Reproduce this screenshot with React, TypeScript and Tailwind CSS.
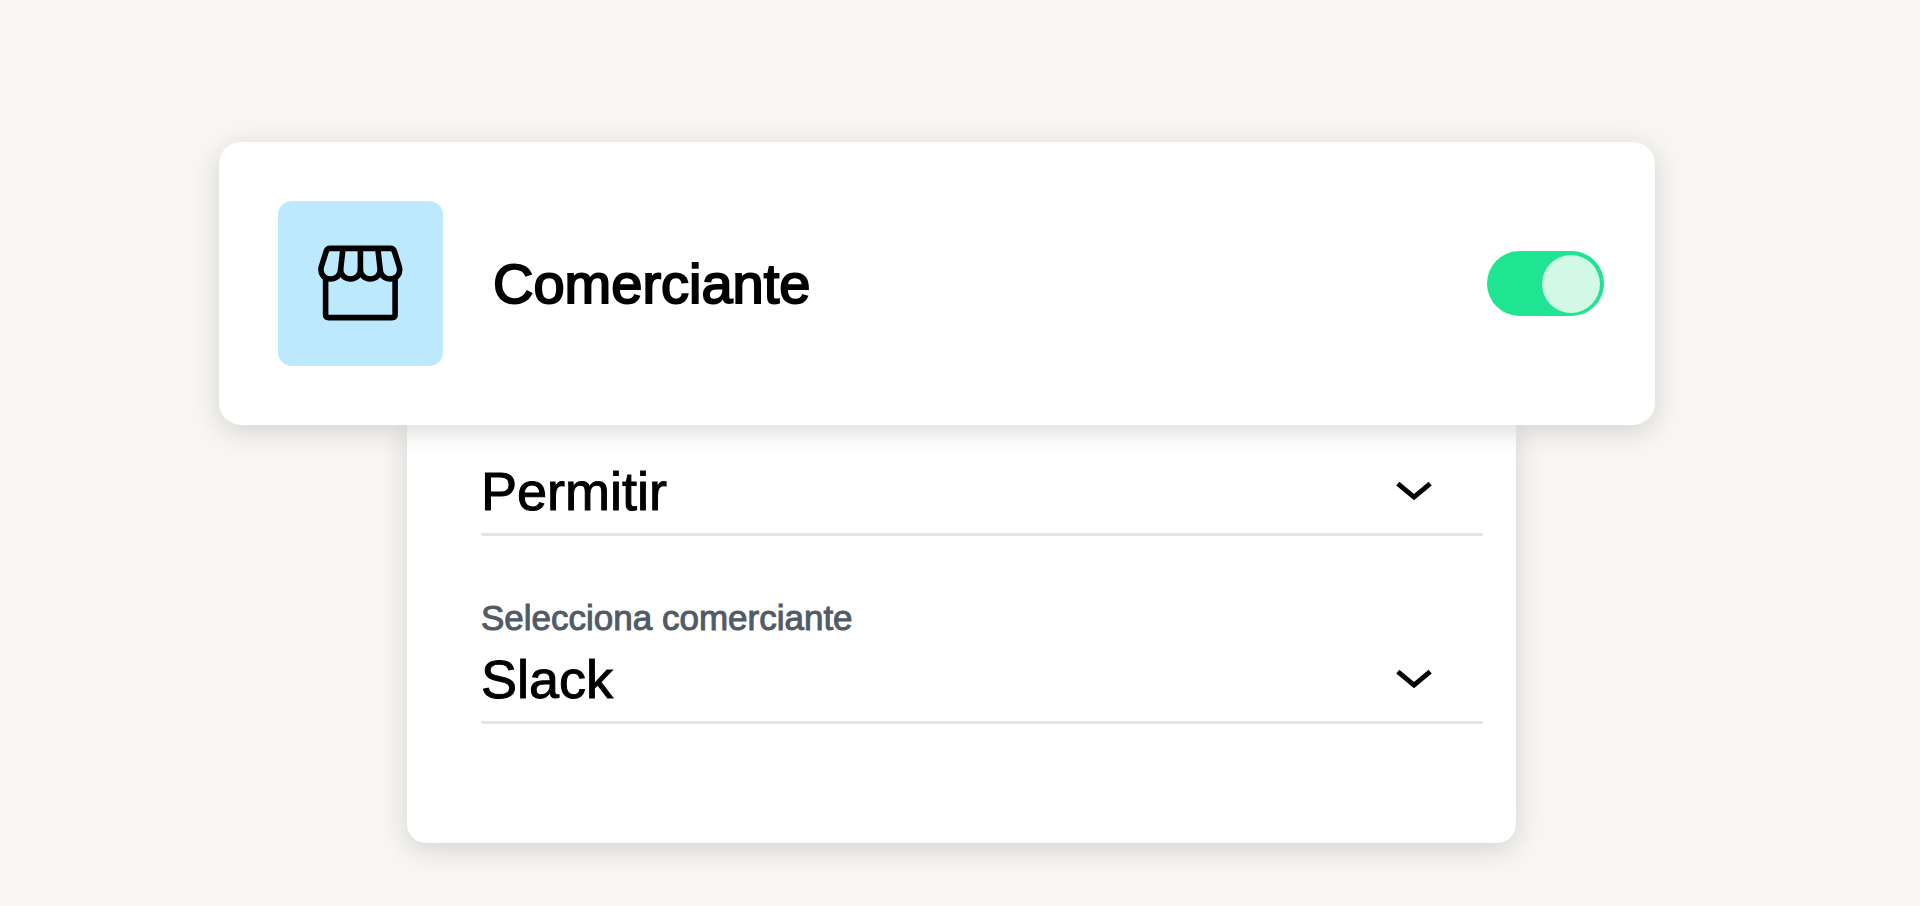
import { useState } from 'react';

interface SelectFieldProps {
    id: string;
    label: string;
    hideLabel?: boolean;
    options: string[];
    value: string;
    onChange: (value: string) => void;
}

function StoreIcon() {
    return (
        <svg
            viewBox="16 14 89 79"
            className="w-[89px] h-[79px]"
            fill="none"
            stroke="currentColor"
            strokeWidth="5.6"
            strokeLinejoin="round"
            aria-hidden="true"
        >
            {/* Walls */}
            <path d="M25.6 47V84.5Q25.6 87.6 28.7 87.6H92Q95.1 87.6 95.1 84.5V47" />
            {/* Awning */}
            <path d="M30.2 18.4H90.4Q93.4 18.4 94.4 21.4L99.2 36.5C101 43.5 97 49 90.2 49C84.5 49 80.2 45 80.2 39.5C80.2 45 76 49 70.3 49C64.6 49 60.4 45 60.4 39.5C60.4 45 56.2 49 50.5 49C44.8 49 40.6 45 40.6 39.5C40.6 45 36.3 49 30.6 49C23.8 49 19.6 43.5 21.4 36.5L26.2 21.4Q27.2 18.4 30.2 18.4Z" />
            <path d="M43 18.4L40.6 39.5M60.4 18.4V39.5M77.8 18.4L80.2 39.5" />
        </svg>
    );
}

function ChevronIcon() {
    return (
        <svg
            viewBox="0 0 36 20"
            className="pointer-events-none col-start-1 row-start-1 w-9 h-5 mr-[51px] mb-4 self-center justify-self-end"
            fill="none"
            stroke="currentColor"
            strokeWidth="4.8"
            aria-hidden="true"
        >
            <path d="M1.8 2.6L18 16.2L34.2 2.6" />
        </svg>
    );
}

function SelectField({
    id,
    label,
    hideLabel,
    options,
    value,
    onChange,
}: SelectFieldProps) {
    return (
        <div>
            {!hideLabel && (
                <label
                    htmlFor={id}
                    className="block mb-[11px] text-[35px] leading-10 text-[#515b66] [-webkit-text-stroke:1px_#515b66]"
                >
                    {label}
                </label>
            )}
            <div className="grid items-center">
                <select
                    id={id}
                    aria-label={hideLabel ? label : undefined}
                    value={value}
                    onChange={(e) => onChange(e.target.value)}
                    className="col-start-1 row-start-1 w-full h-[75px] appearance-none bg-transparent border-b-3 border-[#e8e5dd] pb-3 text-[54px] leading-[60px] text-black [-webkit-text-stroke:1px_black]"
                >
                    {options.map((option) => (
                        <option key={option} value={option}>
                            {option}
                        </option>
                    ))}
                </select>
                <ChevronIcon />
            </div>
        </div>
    );
}

export default function App() {
    const [enabled, setEnabled] = useState(true);
    const [action, setAction] = useState('Permitir');
    const [merchant, setMerchant] = useState('Slack');

    return (
        <main className="min-h-screen bg-[#f7f6f4] pt-[142px] pb-[63px] pl-[219px] pr-[265px] font-['Liberation_Sans',Arial,sans-serif] text-black">
            {/* Merchant toggle */}
            <section className="relative z-10 flex items-center rounded-[22px] bg-white p-[59px] pr-[51px] shadow-[0_6px_26px_rgba(40,30,20,0.16)]">
                <div className="flex size-[165px] shrink-0 items-center justify-center rounded-[14px] bg-[#bde9ff]">
                    <StoreIcon />
                </div>
                <label
                    htmlFor="merchant-enabled"
                    className="ml-[50px] flex-1 text-[56px] leading-[64px] [-webkit-text-stroke:2px_black]"
                >
                    Comerciante
                </label>
                <input
                    id="merchant-enabled"
                    type="checkbox"
                    role="switch"
                    checked={enabled}
                    onChange={(e) => setEnabled(e.target.checked)}
                    className="flex items-center h-[65px] w-[117px] shrink-0 appearance-none rounded-full bg-gray-300 px-1 checked:bg-[#1fe592] before:block before:size-[58px] before:rounded-full before:bg-[#d2f9e5] checked:before:ml-auto"
                />
            </section>

            {/* Rule settings */}
            <section className="ml-[188px] mr-[139px] flex flex-col gap-[62px] rounded-b-[19px] bg-white pt-9 pb-[119px] pl-[74px] pr-[33px] shadow-[0_6px_26px_rgba(40,30,20,0.16)]">
                <SelectField
                    id="action"
                    label="Acción"
                    hideLabel
                    options={['Permitir', 'Bloquear']}
                    value={action}
                    onChange={setAction}
                />
                <SelectField
                    id="merchant"
                    label="Selecciona comerciante"
                    options={['Slack', 'Zoom', 'Notion']}
                    value={merchant}
                    onChange={setMerchant}
                />
            </section>
        </main>
    );
}
